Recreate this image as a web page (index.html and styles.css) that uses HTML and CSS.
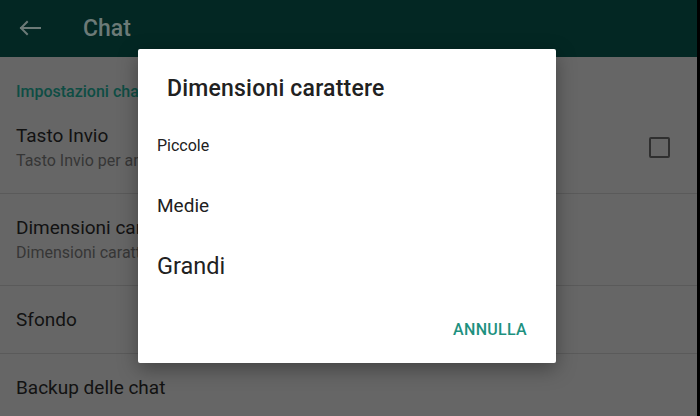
FILE: index.html
```html
<!DOCTYPE html>
<html lang="it">
<head>
<meta charset="utf-8">
<title>Chat</title>
<link rel="stylesheet" href="styles.css">
</head>
<body>
<div class="screen">
  <header class="appbar">
    <svg class="back" width="24" height="16" viewBox="0 0 24 16">
      <path d="M22 8H3M9 2L3 8l6 6" fill="none" stroke="currentColor" stroke-width="2" stroke-linecap="square"/>
    </svg>
    <span class="appbar-title">Chat</span>
  </header>
  <main class="list">
    <div class="section">Impostazioni chat</div>
    <div class="row">
      <div class="row-text">
        <div class="row-title">Tasto Invio</div>
        <div class="row-sub">Tasto Invio per andare a capo</div>
      </div>
      <span class="checkbox"></span>
    </div>
    <div class="row">
      <div class="row-text">
        <div class="row-title">Dimensioni carattere</div>
        <div class="row-sub">Dimensioni carattere: Medie</div>
      </div>
    </div>
    <div class="row row-single">
      <div class="row-title">Sfondo</div>
    </div>
    <div class="row row-single row-last">
      <div class="row-title">Backup delle chat</div>
    </div>
  </main>
  <div class="dialog">
    <div class="dialog-title">Dimensioni carattere</div>
    <div class="options">
      <div class="option opt-s">Piccole</div>
      <div class="option opt-m">Medie</div>
      <div class="option opt-l">Grandi</div>
    </div>
    <div class="actions">
      <span class="btn">ANNULLA</span>
    </div>
  </div>
</div>
</body>
</html>
```
FILE: styles.css
```css
html, body {
  margin: 0;
  padding: 0;
  background: #000;
}
body {
  width: 700px;
  height: 416px;
  overflow: hidden;
  font-family: Roboto, "Liberation Sans", sans-serif;
}
.screen {
  position: relative;
  width: 697px;
  height: 416px;
  background: #666666;
  overflow: hidden;
}
.appbar {
  height: 57px;
  background: #032723;
  display: flex;
  align-items: center;
  color: #6c7a77;
}
.back {
  margin-left: 18px;
  margin-top: -1px;
}
.appbar-title {
  margin-left: 41px;
  font-size: 23px;
  font-weight: 500;
  margin-top: -1px;
}
.section {
  padding: 25px 16px 0;
  font-size: 16px;
  line-height: 20px;
  font-weight: 500;
  color: #0e4d44;
  white-space: nowrap;
}
.row {
  display: flex;
  align-items: center;
  padding: 22px 27px 22px 16px;
  border-bottom: 1px solid #5a5a5a;
}
.row-text {
  flex: 1;
}
.row-title {
  font-size: 19px;
  line-height: 24px;
  color: #121212;
  white-space: nowrap;
}
.row-sub {
  margin-top: 3px;
  font-size: 16px;
  line-height: 20px;
  color: #363636;
  white-space: nowrap;
}
.row-single {
  padding-bottom: 21px;
}
.row-last {
  border-bottom: none;
}
.checkbox {
  width: 21px;
  height: 21px;
  box-sizing: border-box;
  border: 2px solid #2f2f2f;
  border-radius: 2px;
}
.dialog {
  position: absolute;
  left: 138px;
  top: 49px;
  width: 418px;
  height: 314px;
  background: #fff;
  border-radius: 2px;
  box-shadow: 0 6px 20px rgba(0, 0, 0, 0.35);
}
.dialog-title {
  padding: 26px 29px 0;
  font-size: 23px;
  line-height: 28px;
  font-weight: 500;
  letter-spacing: 0.2px;
  color: #212121;
  white-space: nowrap;
}
.options {
  margin-top: 13px;
}
.option {
  padding-left: 19px;
  line-height: 60px;
  height: 60px;
  color: #212121;
}
.opt-s { font-size: 16px; }
.opt-m { font-size: 19px; }
.opt-l { font-size: 23.5px; }
.actions {
  display: flex;
  justify-content: flex-end;
  padding: 24px 29px 23px;
}
.btn {
  font-size: 16px;
  line-height: 20px;
  font-weight: 500;
  color: #1e917f;
  letter-spacing: 0.3px;
}
```
